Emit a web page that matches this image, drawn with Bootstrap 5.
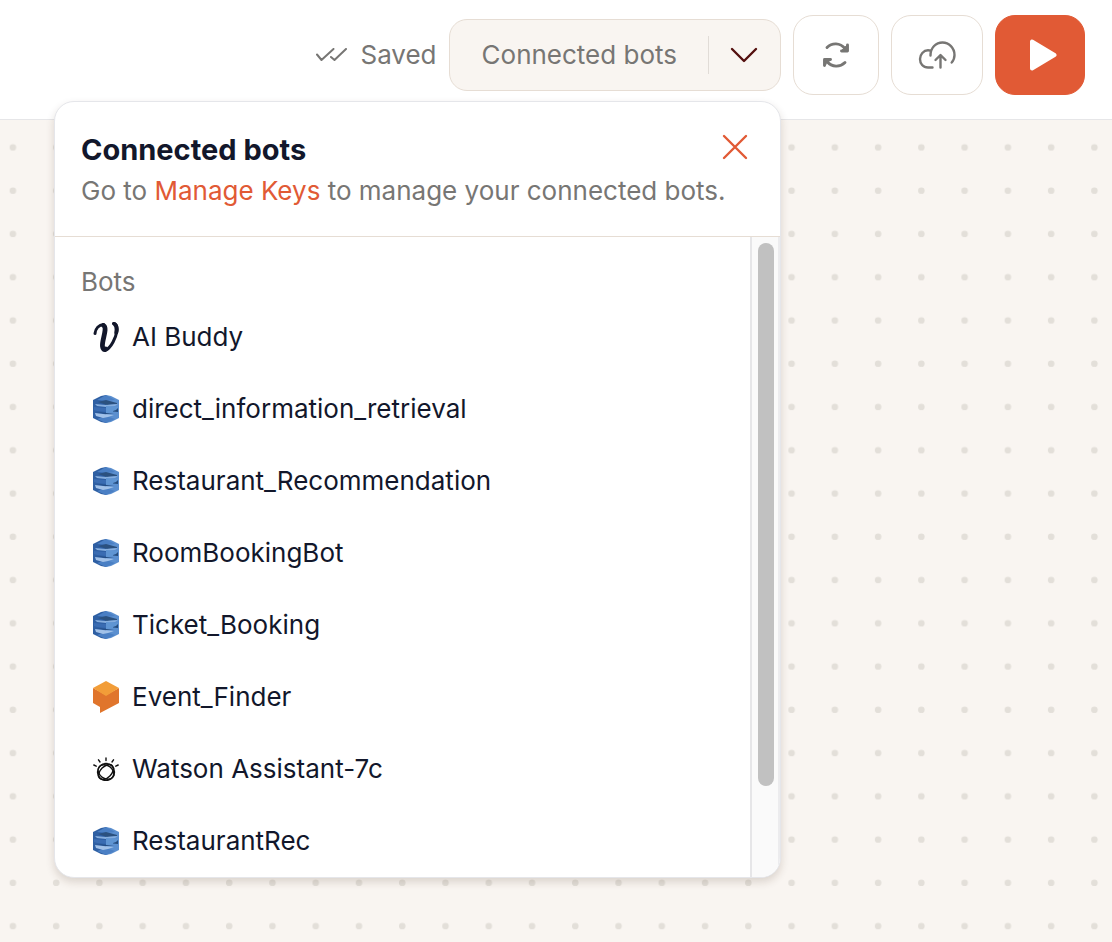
<!DOCTYPE html>
<html lang="en">
<head>
<meta charset="utf-8">
<meta name="viewport" content="width=device-width, initial-scale=1">
<title>Connected bots</title>
<link href="https://cdn.jsdelivr.net/npm/bootstrap@5.3.0/dist/css/bootstrap.min.css" rel="stylesheet">
<style>
  body { font-family: Inter, "Liberation Sans", sans-serif; font-size: 26px; line-height: 38px; color: #777674; background: #f9f5f1; }
  svg { display: block; flex: none; }
  .topbar { height: 120px; background: #fff; border-bottom: 1px solid #e6e6e8; padding: 0 27px 9px 0; gap: 12px; }
  .saved-status { gap: 13px; }
  .split-control { height: 72px; background: #f9f5f1; border: 1px solid #e6ddd4; border-radius: 18px; }
  .split-control button { color: inherit; border: 0; background: none; }
  .split-label { padding: 0 31px 0 32px; }
  .split-toggle { width: 72px; height: 38px; padding: 0 21px; border-left: 1px solid #e1dcd7 !important; }
  .tool-btn { height: 80px; width: 86px; border: 1px solid #e6ddd4; border-radius: 20px; background: #fff; color: #777674; padding: 0; }
  .tool-wide { width: 92px; }
  .tool-run { background: #e15a35; border-color: #e15a35; color: #fff; width: 90px; padding-left: 6px; }
  .bots-menu { position: absolute; top: 82px; right: 0; width: 727px; z-index: 10; background: #fff; border: 1px solid #e5e6ea; border-radius: 20px; box-shadow: 0 4px 8px rgba(60,40,20,.16); overflow: hidden; }
  .menu-head { padding: 29px 29px 25px 26px; height: 135px; border-bottom: 1px solid #e6ddd4; }
  .menu-head h1 { font-size: 29px; line-height: 38px; font-weight: 700; color: #12172b; margin: 0; }
  .menu-head p { line-height: 44px; }
  .accent-link { color: #e15a35; text-decoration: none; }
  .close-btn { border: 0; background: none; padding: 3px; color: #e15a35; }
  .menu-head > div { width: 0; }
  .bots-title { font-size: 26px; line-height: 38px; font-weight: 400; margin: 0; padding: 26px 26px 0; }
  .bot-row { height: 72px; padding: 0 38px; gap: 13px; color: #12172b; text-decoration: none; }
  .scroll-track { width: 30px; background: #fafafa; border-left: 2px solid #e6e6e8; border-right: 2px solid #ececee; padding: 6px; }
  .scroll-thumb { width: 16px; height: 543px; border-radius: 8px; background: #c1c1c1; }
</style>
</head>
<body class="min-vh-100 d-flex flex-column">
<svg width="0" height="0" class="position-absolute" aria-hidden="true">
  <symbol id="lex" viewBox="0 0 26 28">
    <path fill="#2e5fa3" d="M0 5 8 1 13 0v28l-5-1-8-4z"/>
    <path fill="#5b8fcf" d="M13 0l5 1 8 4v18l-8 4-5 1z"/>
    <path fill="#4a7fc4" d="M4 5 13 0l9 5-9 1zM4 24l9-3 9 3-9 4z"/>
    <path fill="#2b517f" d="M5 7l8-2 11 3v1l-10 1z"/>
    <path fill="#86aede" d="M2 9l11 1 12-1-3 2-9 1-9-1z"/>
    <path fill="#3a6cb2" d="M1 12l12 1v4l-9-1-3-1z"/>
    <path fill="#5f95d3" d="M13 11l12 1v5l-12 1z"/>
    <path fill="#244b7d" d="M20 16l3-1 2-2v4l-5-.500zM3 17l10 1 8 0-8 1z"/>
    <path fill="#a1c1e8" d="M2 18l8 1 11 1-6 2-5 1-7-2z"/>
  </symbol>
</svg>
<header class="topbar d-flex align-items-center justify-content-end">
  <div class="saved-status d-flex align-items-center">
    <svg width="31" height="14" viewBox="0 0 31 14" fill="none" stroke="#777674" stroke-width="2" stroke-linecap="round" stroke-linejoin="round"><path d="M1 6.500l4.500 5.500L17.500 1M15 9l3.500 3L30 1"/></svg>
    <span>Saved</span>
  </div>
  <div class="position-relative">
    <div class="split-control d-flex align-items-center">
      <button type="button" class="split-label">Connected bots</button>
      <button type="button" class="split-toggle" aria-label="Toggle connected bots" aria-expanded="true">
        <svg width="28" height="16" viewBox="0 0 28 16" fill="none" stroke="#54100f" stroke-width="2.400" stroke-linecap="round" stroke-linejoin="round"><path d="M2 2l12 12L26 2"/></svg>
      </button>
    </div>
    <section class="bots-menu" aria-label="Connected bots">
      <div class="menu-head d-flex justify-content-between align-items-start">
        <div class="flex-grow-1 text-nowrap">
          <h1>Connected bots</h1>
          <p class="m-0">Go to <a class="accent-link" href="#">Manage Keys</a> to manage your connected bots.</p>
        </div>
        <button type="button" class="close-btn d-flex" aria-label="Close">
          <svg width="26" height="26" viewBox="0 0 26 26" fill="none" stroke="currentColor" stroke-width="2.400" stroke-linecap="round"><path d="M2 2l22 22M24 2L2 24"/></svg>
        </button>
      </div>
      <div class="d-flex">
        <div class="flex-grow-1">
          <h2 class="bots-title">Bots</h2>
          <nav aria-label="Bots">
            <a href="#" class="bot-row d-flex align-items-center">
              <svg width="26" height="32" viewBox="0 0 26 32" fill="none" stroke="#12172b" stroke-linecap="round" stroke-linejoin="round"><path stroke-width="3" d="M2 12.500C2.500 7.500 6 4 10.500 3.500"/><path stroke-width="4.800" d="M10.500 4.500C15 7 8.500 20 9.500 25.500c.3 2.500 1.500 3.500 3 2.500"/><path stroke-width="3" d="M12 29.500C18.500 27 23 16 24 9.500c.4-4-1-6.500-3.500-7"/><path stroke-width="4" d="M21.500 3c2 1.500 2.500 4.500 1.800 8.500"/></svg>
              AI Buddy</a>
            <a href="#" class="bot-row d-flex align-items-center"><svg width="26" height="28"><use href="#lex"/></svg>direct_information_retrieval</a>
            <a href="#" class="bot-row d-flex align-items-center"><svg width="26" height="28"><use href="#lex"/></svg>Restaurant_Recommendation</a>
            <a href="#" class="bot-row d-flex align-items-center"><svg width="26" height="28"><use href="#lex"/></svg>RoomBookingBot</a>
            <a href="#" class="bot-row d-flex align-items-center"><svg width="26" height="28"><use href="#lex"/></svg>Ticket_Booking</a>
            <a href="#" class="bot-row d-flex align-items-center">
              <svg width="26" height="32" viewBox="0 0 26 32"><path fill="#e0752c" d="M0 7l13 7 13-7v15L7 32v-6l-7-4z"/><path fill="#f29d38" d="M13 0l13 7-13 8L0 7z"/></svg>
              Event_Finder</a>
            <a href="#" class="bot-row d-flex align-items-center">
              <svg width="26" height="24" viewBox="0 0 26 24" fill="none" stroke="#111" stroke-linecap="round"><g stroke-width="1.400"><circle cx="13" cy="15" r="8.500"/><ellipse cx="13" cy="15" rx="9" ry="5.500" transform="rotate(-45 13 15)"/><ellipse cx="13" cy="15" rx="8.500" ry="6.500" transform="rotate(35 13 15)"/></g><path stroke-width="1.400" d="M.8 8l2.400 1.200M5.500 2.800L7 5M13 1v2.500M20.500 2.800L19 5M25.200 8l-2.400 1.200"/></svg>
              Watson Assistant-7c</a>
            <a href="#" class="bot-row d-flex align-items-center"><svg width="26" height="28"><use href="#lex"/></svg>RestaurantRec</a>
          </nav>
        </div>
        <div class="scroll-track" aria-hidden="true"><div class="scroll-thumb"></div></div>
      </div>
    </section>
  </div>
  <button type="button" class="tool-btn d-flex align-items-center justify-content-center" aria-label="Sync">
    <svg width="28" height="28" viewBox="0 0 28 28" fill="none" stroke="currentColor" stroke-width="2.900" stroke-linecap="round" stroke-linejoin="round"><path d="M5 6.500C10 1.500 18 1.500 23 7.500M25.500 4v6h-6M23 21.500C18 26.500 10 26.500 5 20.500M2.500 24.500V18.500h6"/><path fill="currentColor" stroke-width="1" d="M25.500 4v6h-6zM2.500 24.500v-6h6z"/></svg>
  </button>
  <button type="button" class="tool-btn tool-wide d-flex align-items-center justify-content-center" aria-label="Publish">
    <svg width="38" height="28" viewBox="0 0 38 28" fill="none" stroke="currentColor" stroke-width="2.400" stroke-linecap="round" stroke-linejoin="round"><path d="M14.500 26.500H10C5 26.500 2 22.500 2 18s3.500-8.700 8-8.700c1 0 2 .2 2.500.5M12.500 14.500C12.500 6.500 18 1.500 24.500 1.500S36.500 7 36.500 14c0 3-1 5.500-2.800 7.500M22.500 26.500V14.500M17.500 19l5-5 5 5"/></svg>
  </button>
  <button type="button" class="tool-btn tool-run d-flex align-items-center justify-content-center" aria-label="Run">
    <svg width="28" height="32" viewBox="0 0 28 32" fill="currentColor" stroke="currentColor" stroke-width="4" stroke-linejoin="round"><path d="M3 2.500v27L25.500 16z"/></svg>
  </button>
</header>
<main class="flex-grow-1 d-flex">
  <svg class="flex-grow-1" width="100" aria-hidden="true">
    <defs><pattern id="dots" width="43.260" height="43.260" patternUnits="userSpaceOnUse" patternTransform="translate(-9 6)"><circle cx="21.900" cy="21.400" r="3.300" fill="#e3dfd9"/></pattern></defs>
    <rect width="100%" height="100%" fill="url(#dots)"/>
  </svg>
</main>
<script src="https://cdn.jsdelivr.net/npm/bootstrap@5.3.0/dist/js/bootstrap.bundle.min.js"></script>
</body>
</html>
